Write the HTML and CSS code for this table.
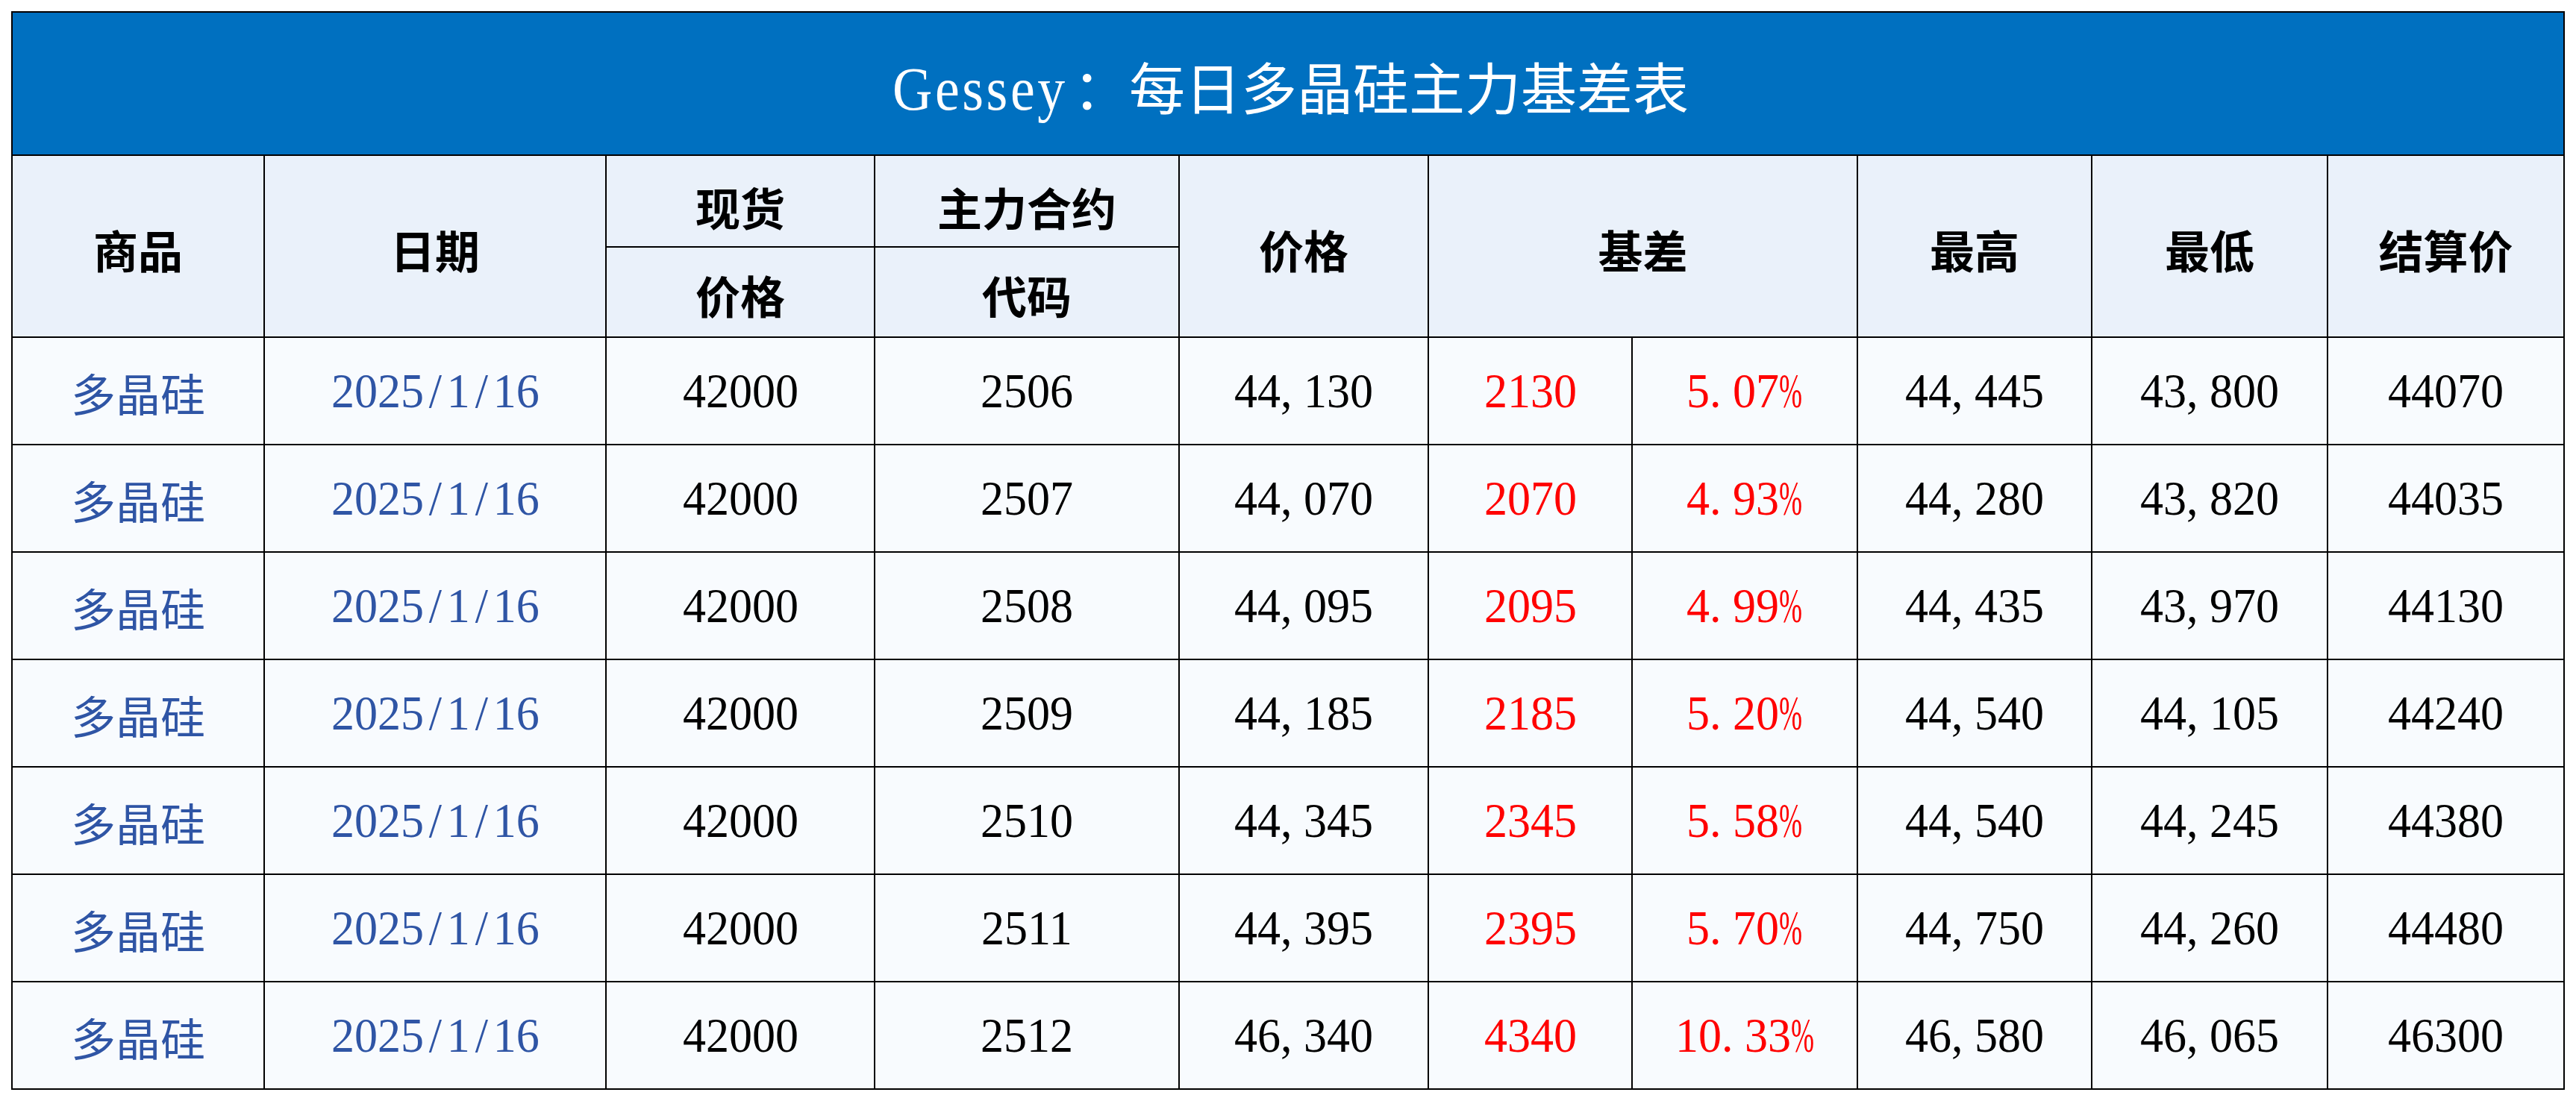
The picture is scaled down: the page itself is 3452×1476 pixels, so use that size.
FILE: index.html
```html
<!DOCTYPE html>
<html lang="zh-CN">
<head>
<meta charset="utf-8">
<title>Gessey：每日多晶硅主力基差表</title>
<link rel="stylesheet" href="styles.css">
</head>
<body>
<table class="sheet">
  <colgroup>
    <col class="c1"><col class="c2"><col class="c3"><col class="c4"><col class="c5">
    <col class="c6"><col class="c7"><col class="c8"><col class="c9"><col class="c10">
  </colgroup>
  <thead>
    <tr class="title-row">
      <th colspan="10" class="title"><span class="lat">Gessey</span>：每日多晶硅主力基差表</th>
    </tr>
    <tr class="head-top">
      <th rowspan="2">商品</th>
      <th rowspan="2">日期</th>
      <th>现货</th>
      <th>主力合约</th>
      <th rowspan="2">价格</th>
      <th rowspan="2" colspan="2">基差</th>
      <th rowspan="2">最高</th>
      <th rowspan="2">最低</th>
      <th rowspan="2">结算价</th>
    </tr>
    <tr class="head-bot">
      <th>价格</th>
      <th>代码</th>
    </tr>
  </thead>
  <tbody>
    <tr>
      <td class="blue cn">多晶硅</td>
      <td class="blue num"><span class="v">2025<span class="sl">/</span>1<span class="sl">/</span>16</span></td>
      <td class="num"><span class="v">42000</span></td>
      <td class="num"><span class="v">2506</span></td>
      <td class="num"><span class="v">44<span class="cm">,</span>130</span></td>
      <td class="num red"><span class="v">2130</span></td>
      <td class="num red"><span class="v">5<span class="cm">.</span>07<span class="pc">%</span></span></td>
      <td class="num"><span class="v">44<span class="cm">,</span>445</span></td>
      <td class="num"><span class="v">43<span class="cm">,</span>800</span></td>
      <td class="num"><span class="v">44070</span></td>
    </tr>
    <tr>
      <td class="blue cn">多晶硅</td>
      <td class="blue num"><span class="v">2025<span class="sl">/</span>1<span class="sl">/</span>16</span></td>
      <td class="num"><span class="v">42000</span></td>
      <td class="num"><span class="v">2507</span></td>
      <td class="num"><span class="v">44<span class="cm">,</span>070</span></td>
      <td class="num red"><span class="v">2070</span></td>
      <td class="num red"><span class="v">4<span class="cm">.</span>93<span class="pc">%</span></span></td>
      <td class="num"><span class="v">44<span class="cm">,</span>280</span></td>
      <td class="num"><span class="v">43<span class="cm">,</span>820</span></td>
      <td class="num"><span class="v">44035</span></td>
    </tr>
    <tr>
      <td class="blue cn">多晶硅</td>
      <td class="blue num"><span class="v">2025<span class="sl">/</span>1<span class="sl">/</span>16</span></td>
      <td class="num"><span class="v">42000</span></td>
      <td class="num"><span class="v">2508</span></td>
      <td class="num"><span class="v">44<span class="cm">,</span>095</span></td>
      <td class="num red"><span class="v">2095</span></td>
      <td class="num red"><span class="v">4<span class="cm">.</span>99<span class="pc">%</span></span></td>
      <td class="num"><span class="v">44<span class="cm">,</span>435</span></td>
      <td class="num"><span class="v">43<span class="cm">,</span>970</span></td>
      <td class="num"><span class="v">44130</span></td>
    </tr>
    <tr>
      <td class="blue cn">多晶硅</td>
      <td class="blue num"><span class="v">2025<span class="sl">/</span>1<span class="sl">/</span>16</span></td>
      <td class="num"><span class="v">42000</span></td>
      <td class="num"><span class="v">2509</span></td>
      <td class="num"><span class="v">44<span class="cm">,</span>185</span></td>
      <td class="num red"><span class="v">2185</span></td>
      <td class="num red"><span class="v">5<span class="cm">.</span>20<span class="pc">%</span></span></td>
      <td class="num"><span class="v">44<span class="cm">,</span>540</span></td>
      <td class="num"><span class="v">44<span class="cm">,</span>105</span></td>
      <td class="num"><span class="v">44240</span></td>
    </tr>
    <tr>
      <td class="blue cn">多晶硅</td>
      <td class="blue num"><span class="v">2025<span class="sl">/</span>1<span class="sl">/</span>16</span></td>
      <td class="num"><span class="v">42000</span></td>
      <td class="num"><span class="v">2510</span></td>
      <td class="num"><span class="v">44<span class="cm">,</span>345</span></td>
      <td class="num red"><span class="v">2345</span></td>
      <td class="num red"><span class="v">5<span class="cm">.</span>58<span class="pc">%</span></span></td>
      <td class="num"><span class="v">44<span class="cm">,</span>540</span></td>
      <td class="num"><span class="v">44<span class="cm">,</span>245</span></td>
      <td class="num"><span class="v">44380</span></td>
    </tr>
    <tr>
      <td class="blue cn">多晶硅</td>
      <td class="blue num"><span class="v">2025<span class="sl">/</span>1<span class="sl">/</span>16</span></td>
      <td class="num"><span class="v">42000</span></td>
      <td class="num"><span class="v">2511</span></td>
      <td class="num"><span class="v">44<span class="cm">,</span>395</span></td>
      <td class="num red"><span class="v">2395</span></td>
      <td class="num red"><span class="v">5<span class="cm">.</span>70<span class="pc">%</span></span></td>
      <td class="num"><span class="v">44<span class="cm">,</span>750</span></td>
      <td class="num"><span class="v">44<span class="cm">,</span>260</span></td>
      <td class="num"><span class="v">44480</span></td>
    </tr>
    <tr>
      <td class="blue cn">多晶硅</td>
      <td class="blue num"><span class="v">2025<span class="sl">/</span>1<span class="sl">/</span>16</span></td>
      <td class="num"><span class="v">42000</span></td>
      <td class="num"><span class="v">2512</span></td>
      <td class="num"><span class="v">46<span class="cm">,</span>340</span></td>
      <td class="num red"><span class="v">4340</span></td>
      <td class="num red"><span class="v">10<span class="cm">.</span>33<span class="pc">%</span></span></td>
      <td class="num"><span class="v">46<span class="cm">,</span>580</span></td>
      <td class="num"><span class="v">46<span class="cm">,</span>065</span></td>
      <td class="num"><span class="v">46300</span></td>
    </tr>
  </tbody>
</table>
</body>
</html>
```
FILE: styles.css
```css
html, body {
  margin: 0;
  padding: 0;
  background: #ffffff;
}

body {
  padding: 15px 0 0 15px;
  font-family: "Liberation Serif", "Noto Sans CJK SC", serif;
}

.sheet {
  border-collapse: collapse;
  table-layout: fixed;
  width: 3422px;
  border: 2px solid #000;
}

.c1 { width: 338px; }
.c2 { width: 458px; }
.c3 { width: 360px; }
.c4 { width: 408px; }
.c5 { width: 334px; }
.c6 { width: 273px; }
.c7 { width: 302px; }
.c8 { width: 314px; }
.c9 { width: 316px; }
.c10 { width: 317px; }

.sheet th,
.sheet td {
  border: 2px solid #000;
  padding: 0;
  text-align: center;
  vertical-align: middle;
  white-space: nowrap;
  overflow: hidden;
}

.title-row { height: 192px; }

.sheet th.title {
  background: #0070c0;
  color: #ffffff;
  font-family: "Noto Sans CJK SC", sans-serif;
  font-weight: 400;
  font-size: 75px;
  line-height: 1;
  padding-top: 14px;
}

.title .lat {
  font-family: "Liberation Serif", serif;
  display: inline-block;
  font-size: 82px;
  letter-spacing: 4px;
  transform: scaleX(0.9);
  margin: 0 -6px;
}

.head-top { height: 123px; }
.head-bot { height: 121px; }

.head-top th,
.head-bot th {
  background: #eaf1fa;
  color: #000;
  font-family: "Noto Sans CJK SC", sans-serif;
  font-weight: 700;
  font-size: 60px;
  line-height: 1;
}

.head-top th[rowspan] { padding-top: 8px; }
.head-top th:not([rowspan]) { padding-top: 14px; }
.head-bot th { padding-top: 6px; }

tbody tr { height: 144px; }

tbody td {
  background: #f8fbfe;
  color: #000;
  font-size: 66px;
  line-height: 1;
  padding-top: 8px;
}

tbody td.cn {
  font-family: "Noto Sans CJK SC", sans-serif;
  font-size: 60px;
  padding-top: 4px;
}

.num {
  font-family: "Liberation Serif", serif;
}

.v {
  display: inline-block;
  transform: scaleX(0.94);
  transform-origin: center center;
}

.blue { color: #2f55a5; }
.red { color: #ff0000; }

.cm {
  display: inline-block;
  margin-right: 0.25em;
}

.sl {
  display: inline-block;
  margin: 0 0.11em;
}

.pc {
  display: inline-block;
  transform: scaleX(0.6);
  transform-origin: left center;
  margin-right: -0.333em;
}
```
